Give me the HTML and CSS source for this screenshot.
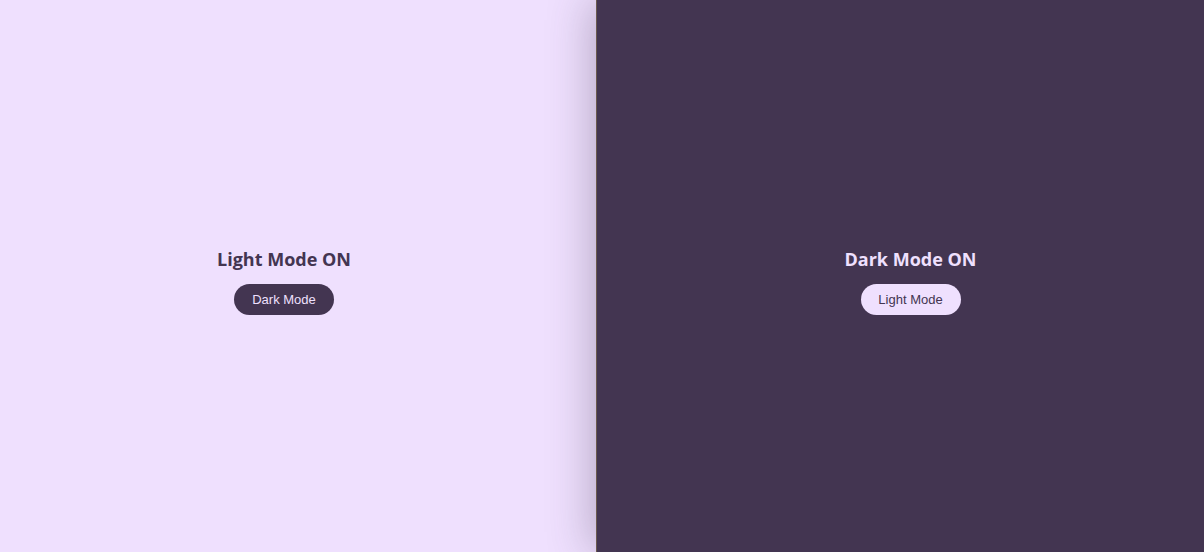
FILE: index.html
```html
<!DOCTYPE html>
<html>
<head>
<meta charset="utf-8">
<link rel="stylesheet" href="styles.css">
</head>
<body>
<div class="split">
  <section class="panel light">
    <div class="content">
      <h2 class="title">Light Mode ON</h2>
      <button class="toggle">Dark Mode</button>
    </div>
  </section>
  <section class="panel dark">
    <div class="content">
      <h2 class="title">Dark Mode ON</h2>
      <button class="toggle">Light Mode</button>
    </div>
  </section>
</div>
</body>
</html>
```
FILE: styles.css
```css
html, body {
  margin: 0;
  padding: 0;
  height: 100%;
}
.split {
  display: flex;
  height: 552px;
  width: 1204px;
  overflow: hidden;
}
.panel {
  display: flex;
  align-items: center;
  justify-content: center;
  box-sizing: border-box;
}
.light {
  width: 596px;
  background: #efe0fe;
  color: #433551;
  padding-right: 28px;
}
.dark {
  position: relative;
  flex: 1;
  background: #433551;
  color: #efe0fe;
  padding-left: 20px;
  border-left: 1px solid #6b5a4e;
  box-shadow: -6px 0 40px rgba(67, 53, 81, 0.3);
}
.content {
  display: flex;
  flex-direction: column;
  align-items: center;
  margin-top: 10px;
}
.title {
  margin: 0 0 13px;
  font-family: "Open Sans", "Noto Sans", sans-serif;
  font-weight: 700;
  font-size: 18px;
  line-height: 24px;
}
.toggle {
  width: 100px;
  height: 31px;
  border: none;
  border-radius: 16px;
  font-family: "Liberation Sans", Arial, sans-serif;
  font-size: 13px;
  cursor: pointer;
}
.light .toggle {
  background: #433551;
  color: #efe0fe;
}
.dark .toggle {
  background: #efe0fe;
  color: #433551;
}
```
